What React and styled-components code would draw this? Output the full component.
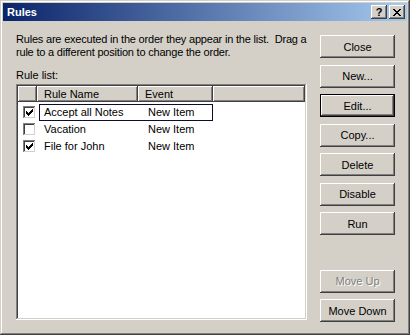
import React from 'react';
import styled, { createGlobalStyle } from 'styled-components';

const GlobalStyle = createGlobalStyle`
  html, body {
    margin: 0;
    padding: 0;
    background: #d4d0c8;
  }
  body {
    font-family: "Liberation Sans", Arial, sans-serif;
    font-size: 11px;
    color: #000;
  }
`;

const Window = styled.div`
  width: 410px;
  height: 335px;
  box-sizing: border-box;
  background: #d4d0c8;
  padding: 3px;
  display: flex;
  flex-direction: column;
  box-shadow: inset -1px -1px #404040, inset 1px 1px #d4d0c8,
    inset -2px -2px #808080, inset 2px 2px #fff;
`;

const TitleBar = styled.div`
  height: 18px;
  display: flex;
  align-items: center;
  padding: 0 2px 0 2px;
  background: linear-gradient(to right, #0a246a, #a6caf0);
`;

const Title = styled.span`
  flex: 1;
  color: #fff;
  font-weight: bold;
  font-size: 11px;
  padding-left: 2px;
`;

const CaptionButton = styled.div`
  width: 16px;
  height: 14px;
  box-sizing: border-box;
  margin-left: ${(p) => (p.$gap ? '2px' : '0')};
  background: #d4d0c8;
  display: flex;
  align-items: center;
  justify-content: center;
  font-weight: bold;
  font-size: 11px;
  box-shadow: inset -1px -1px #404040, inset 1px 1px #fff,
    inset -2px -2px #808080, inset 2px 2px #d4d0c8;
`;

const Body = styled.div`
  flex: 1;
  display: flex;
  gap: 13px;
  padding: 12px 12px 10px 13px;
`;

const LeftCol = styled.div`
  flex: 1;
  min-width: 0;
  display: flex;
  flex-direction: column;
  padding-bottom: 2px;
`;

const Intro = styled.p`
  margin: 0;
  line-height: 13px;
  white-space: nowrap;
  letter-spacing: -0.2px;
`;

const Label = styled.div`
  margin-top: 10px;
  line-height: 13px;
`;

const ListBox = styled.div`
  flex: 1;
  margin-top: 2px;
  background: #fff;
  padding: 2px;
  box-shadow: inset -1px -1px #fff, inset 1px 1px #808080,
    inset -2px -2px #d4d0c8, inset 2px 2px #404040;
  display: flex;
  flex-direction: column;
`;

const cols = '19px 101px 75px 1fr';

const Header = styled.div`
  display: grid;
  grid-template-columns: ${cols};
  height: 16px;
`;

const HeadCell = styled.div`
  background: #d4d0c8;
  padding-left: 7px;
  line-height: 16px;
  white-space: nowrap;
  box-shadow: inset -1px -1px #404040, inset 1px 1px #fff,
    inset -2px -2px #808080;
`;

const Rows = styled.div`
  padding-top: 2px;
`;

const Row = styled.div`
  display: grid;
  grid-template-columns: 19px 176px;
  height: 17px;
`;

const CheckCell = styled.div`
  display: flex;
  align-items: center;
  justify-content: flex-end;
  padding-right: 1px;
`;

const RowBody = styled.div`
  display: grid;
  grid-template-columns: 101px 75px;
  margin-left: 2px;
  box-sizing: border-box;
  border: 1px solid ${(p) => (p.$focused ? '#0c0c30' : 'transparent')};
  align-items: center;
`;

const RowText = styled.span`
  padding-left: 4px;
  line-height: 15px;
  white-space: nowrap;
`;

const EventText = styled(RowText)`
  padding-left: 7px;
`;

const Box = styled.div`
  width: 13px;
  height: 13px;
  background: #fff;
  box-shadow: inset -1px -1px #fff, inset 1px 1px #808080,
    inset -2px -2px #d4d0c8, inset 2px 2px #404040;
`;

const RightCol = styled.div`
  width: 75px;
  display: flex;
  flex-direction: column;
  gap: 6.5px;
  padding-top: 2px;
`;

const Button = styled.div`
  height: 23px;
  display: flex;
  align-items: center;
  justify-content: center;
  background: #d4d0c8;
  color: ${(p) => (p.$disabled ? '#808080' : '#000')};
  text-shadow: ${(p) => (p.$disabled ? '1px 1px #fff' : 'none')};
  margin-top: ${(p) => (p.$pushDown ? 'auto' : '0')};
  box-shadow: ${(p) =>
    p.$default
      ? 'inset -1px -1px #000, inset 1px 1px #000, inset -2px -2px #404040, inset 2px 2px #fff, inset -3px -3px #808080'
      : 'inset -1px -1px #404040, inset 1px 1px #fff, inset -2px -2px #808080, inset 2px 2px #d4d0c8'};
`;

const CheckMark = () => (
  <svg width="13" height="13" viewBox="0 0 13 13" shapeRendering="crispEdges">
    <path
      fill="#000"
      d="M3 5h1v3H3z M4 6h1v3H4z M5 7h1v3H5z M6 6h1v3H6z M7 5h1v3H7z M8 4h1v3H8z M9 3h1v3H9z"
    />
  </svg>
);

const rules = [
  { name: 'Accept all Notes', event: 'New Item', on: true },
  { name: 'Vacation', event: 'New Item', on: false },
  { name: 'File for John', event: 'New Item', on: true },
];

const App = () => {
  return (
    <>
      <GlobalStyle />
      <Window>
        <TitleBar>
          <Title>Rules</Title>
          <CaptionButton>?</CaptionButton>
          <CaptionButton $gap>
            <svg width="8" height="7" viewBox="0 0 8 7" shapeRendering="crispEdges">
              <path
                fill="#000"
                d="M0 0h2v1h1v1h2V1h1V0h2v1H7v1H6v1H5v1h1v1h1v1h1v1H6V6H5V5H3v1H2v1H0V6h1V5h1V4h1V3H2V2H1V1H0z"
              />
            </svg>
          </CaptionButton>
        </TitleBar>
        <Body>
          <LeftCol>
            <Intro>
              Rules are executed in the order they appear in the list.&nbsp; Drag a
              <br />
              rule to a different position to change the order.
            </Intro>
            <Label>Rule list:</Label>
            <ListBox>
              <Header>
                <HeadCell />
                <HeadCell>Rule Name</HeadCell>
                <HeadCell>Event</HeadCell>
                <HeadCell />
              </Header>
              <Rows>
                {rules.map((r, i) => (
                  <Row key={r.name}>
                    <CheckCell>
                      <Box>{r.on && <CheckMark />}</Box>
                    </CheckCell>
                    <RowBody $focused={i === 0}>
                      <RowText>{r.name}</RowText>
                      <EventText>{r.event}</EventText>
                    </RowBody>
                  </Row>
                ))}
              </Rows>
            </ListBox>
          </LeftCol>
          <RightCol>
            <Button>Close</Button>
            <Button>New...</Button>
            <Button $default>Edit...</Button>
            <Button>Copy...</Button>
            <Button>Delete</Button>
            <Button>Disable</Button>
            <Button>Run</Button>
            <Button $pushDown $disabled>
              Move Up
            </Button>
            <Button>Move Down</Button>
          </RightCol>
        </Body>
      </Window>
    </>
  );
};

export default App;
